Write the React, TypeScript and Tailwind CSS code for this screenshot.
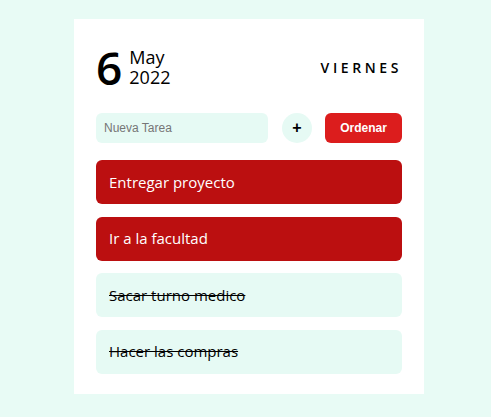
import React from "react";

const tasks = [
  { text: "Entregar proyecto", done: false },
  { text: "Ir a la facultad", done: false },
  { text: "Sacar turno medico", done: true },
  { text: "Hacer las compras", done: true },
];

export default function App() {
  return (
    <div className="min-h-screen w-full bg-[#e8fbf5] pt-[19px] pl-[74px]" style={{ fontFamily: "'Open Sans', sans-serif" }}>
      <div className="w-[350px] bg-white px-[22px] pt-[15px] pb-[20px]">
        <div className="flex items-center justify-between h-[66px]">
          <div className="flex items-center">
            <span className="text-[46px] font-semibold leading-none text-black">6</span>
            <div className="ml-[7px] flex flex-col">
              <span className="text-[18px] leading-[20px] font-medium text-black">May</span>
              <span className="text-[18px] leading-[20px] text-black">2022</span>
            </div>
          </div>
          <span className="text-[14px] font-semibold tracking-[3.6px] text-black">VIERNES</span>
        </div>
        <div className="mt-[13px] flex items-center h-[30px]">
          <input
            placeholder="Nueva Tarea"
            className="h-[30px] w-[172px] rounded-md bg-[#e6faf4] px-[8px] text-[12px] outline-none placeholder:text-[#767676]"
            style={{ fontFamily: "'Liberation Sans', Arial, sans-serif" }}
          />
          <button className="ml-[14px] flex h-[30px] w-[30px] items-center justify-center rounded-full bg-[#e6faf4] text-[16px] font-bold text-black" style={{ fontFamily: "'Liberation Sans', Arial, sans-serif" }}>
            +
          </button>
          <button className="ml-auto h-[30px] w-[77px] rounded-md bg-[#dc1d1d] text-[12px] font-bold text-white" style={{ fontFamily: "'Liberation Sans', Arial, sans-serif" }}>
            Ordenar
          </button>
        </div>
        <div className="mt-[17px] flex flex-col gap-[12.5px]">
          {tasks.map((t) => (
            <div
              key={t.text}
              className={
                t.done
                  ? "flex h-[44px] items-center rounded-md bg-[#e6faf4] px-[13px] text-[15px] text-black line-through"
                  : "flex h-[44px] items-center rounded-md bg-[#bb0f10] px-[13px] text-[15px] text-white"
              }
            >
              {t.text}
            </div>
          ))}
        </div>
      </div>
    </div>
  );
}
